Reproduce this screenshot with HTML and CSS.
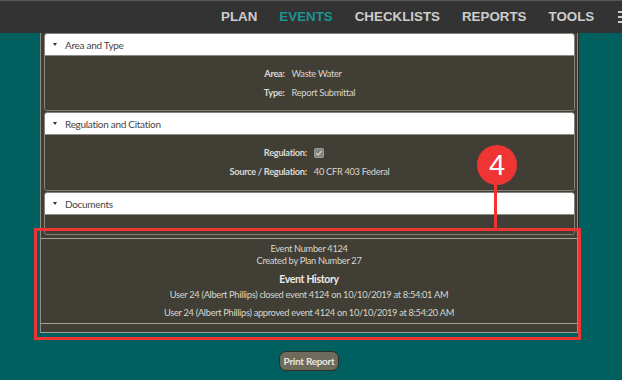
FILE: index.html
```html
<!DOCTYPE html>
<html>
<head>
<meta charset="utf-8">
<link rel="stylesheet" href="styles.css">
</head>
<body>
<nav class="topbar">
  <a class="nav-item">PLAN</a>
  <a class="nav-item active">EVENTS</a>
  <a class="nav-item">CHECKLISTS</a>
  <a class="nav-item">REPORTS</a>
  <a class="nav-item">TOOLS</a>
  <span class="hamburger"><i></i><i></i><i></i></span>
</nav>

<main class="panel">
  <div class="sections">
    <section class="section">
      <header class="section-head"><span class="caret"></span>Area and Type</header>
      <div class="section-body">
        <div class="fields">
          <span class="label">Area:</span><span class="value">Waste Water</span>
          <span class="label">Type:</span><span class="value">Report Submittal</span>
        </div>
      </div>
    </section>
    <section class="section">
      <header class="section-head"><span class="caret"></span>Regulation and Citation</header>
      <div class="section-body tall">
        <div class="fields">
          <span class="label">Regulation:</span>
          <span class="value"><svg class="checkbox" width="10" height="10" viewBox="0 0 10 10"><rect x="0.5" y="0.5" width="9" height="9" rx="1" fill="#858581" stroke="#9c9c97"/><path d="M2.3 5.2 L4.2 7 L7.8 2.9" fill="none" stroke="#cfcfca" stroke-width="1.2"/></svg></span>
          <span class="label">Source / Regulation:</span><span class="value">40 CFR 403 Federal</span>
        </div>
      </div>
    </section>
    <section class="section">
      <header class="section-head"><span class="caret"></span>Documents</header>
      <div class="section-body empty"></div>
    </section>
  </div>

  <div class="history">
    <div class="history-body">
      <p class="meta">Event Number 4124</p>
      <p class="meta">Created by Plan Number 27</p>
      <h3 class="history-title">Event History</h3>
      <p class="entry">User 24 (Albert Phillips) closed event 4124 on 10/10/2019 at 8:54:01 AM</p>
      <p class="entry">User 24 (Albert Phillips) approved event 4124 on 10/10/2019 at 8:54:20 AM</p>
    </div>
    <div class="history-foot"></div>
  </div>
</main>

<div class="actions">
  <button class="print-btn">Print Report</button>
</div>

<div class="callout-box"></div>
<div class="callout-line"></div>
<div class="callout-badge">4</div>
</body>
</html>
```

FILE: styles.css
```css
html, body {
  margin: 0;
  padding: 0;
}
body {
  position: relative;
  width: 622px;
  height: 380px;
  overflow: hidden;
  background: #005f5f;
  font-family: Lato, "Liberation Sans", sans-serif;
  font-size: 9.3px;
  letter-spacing: -0.32px;
}

/* top navigation */
.topbar {
  box-sizing: border-box;
  height: 33px;
  background: #333333;
  border-top: 1px solid #575757;
  display: flex;
  align-items: center;
  padding-left: 210px;
  white-space: nowrap;
  overflow: hidden;
  letter-spacing: 0;
}
.nav-item {
  font-family: "Liberation Sans", Arial, sans-serif;
  font-weight: bold;
  font-size: 13.35px;
  color: #cdcdcd;
  padding: 0 11px;
  line-height: 16px;
}
.nav-item.active {
  color: #1b9494;
}
.hamburger {
  display: flex;
  flex-direction: column;
  gap: 3px;
  margin-left: 13px;
  flex: none;
}
.hamburger i {
  display: block;
  width: 12px;
  height: 2px;
  background: #cdcdcd;
}

/* main panel */
.panel {
  box-sizing: border-box;
  margin-left: 40px;
  width: 538px;
  background: #413f35;
  border-left: 1px solid #8f8d84;
  border-right: 1px solid #8f8d84;
  box-shadow: 1px 0 0 #2b2b27;
}
.sections {
  padding: 0 2px 0 3px;
}
.section {
  border: 1px solid #85837a;
  border-radius: 3px;
  margin-bottom: 1px;
  overflow: hidden;
}
.section-head {
  height: 21px;
  background: #ffffff;
  border-bottom: 1px solid #8a8a86;
  display: flex;
  align-items: center;
  padding-left: 8px;
  color: #454545;
  font-size: 10px;
  letter-spacing: -0.3px;
}
.caret {
  width: 0;
  height: 0;
  border-left: 2.5px solid transparent;
  border-right: 2.5px solid transparent;
  border-top: 3px solid #333;
  margin-right: 8px;
}
.section-body {
  padding: 8px 0 8px;
  background: #413f35;
}
.section-body.tall {
  padding-bottom: 9px;
}
.section-body.empty {
  height: 19px;
  padding: 0;
}
.fields {
  display: grid;
  grid-template-columns: auto auto;
  justify-content: center;
  column-gap: 7px;
  grid-auto-rows: 19px;
  align-items: center;
  color: #d6d6d0;
}
.label {
  justify-self: end;
  font-weight: bold;
  color: #d9d9d3;
}
.value {
  display: flex;
  align-items: center;
}
.checkbox {
  display: block;
}

/* history */
.history {
  margin-top: 3px;
  border-top: 1px solid #a3a196;
  border-bottom: 1px solid #a3a196;
}
.history-body {
  padding: 4px 0 1px;
  border-bottom: 1px solid #a3a196;
  text-align: center;
  color: #d6d6d0;
}
.meta {
  margin: 0;
  line-height: 12px;
}
.history-title {
  margin: 6px 0 0;
  font-size: 10.5px;
  line-height: 12px;
  font-weight: bold;
  color: #ececea;
}
.entry {
  margin: 0;
  line-height: 18px;
}
.history-title + .entry {
  margin-top: 1px;
}
.history-foot {
  height: 8px;
}

/* print button */
.actions {
  width: 538px;
  margin-left: 40px;
  margin-top: 18px;
  display: flex;
  justify-content: center;
}
.print-btn {
  height: 20px;
  padding: 0 4px;
  background: #6f6b5c;
  border: 1px solid #2e2d28;
  border-radius: 7px;
  color: #e6e6de;
  font-family: Lato, "Liberation Sans", sans-serif;
  font-weight: bold;
  font-size: 10px;
  letter-spacing: -0.3px;
}

/* annotation overlay */
.callout-box {
  position: absolute;
  left: 34px;
  top: 228px;
  width: 547px;
  height: 112px;
  box-sizing: border-box;
  border: 3px solid #ef3434;
}
.callout-line {
  position: absolute;
  left: 494px;
  top: 180px;
  width: 3px;
  height: 50px;
  background: #ef3434;
}
.callout-badge {
  position: absolute;
  left: 477px;
  top: 145px;
  width: 40px;
  height: 40px;
  border-radius: 50%;
  background: #ef3434;
  color: #ffffff;
  font-family: "Liberation Sans", Arial, sans-serif;
  font-size: 29px;
  line-height: 40px;
  text-align: center;
}
```
